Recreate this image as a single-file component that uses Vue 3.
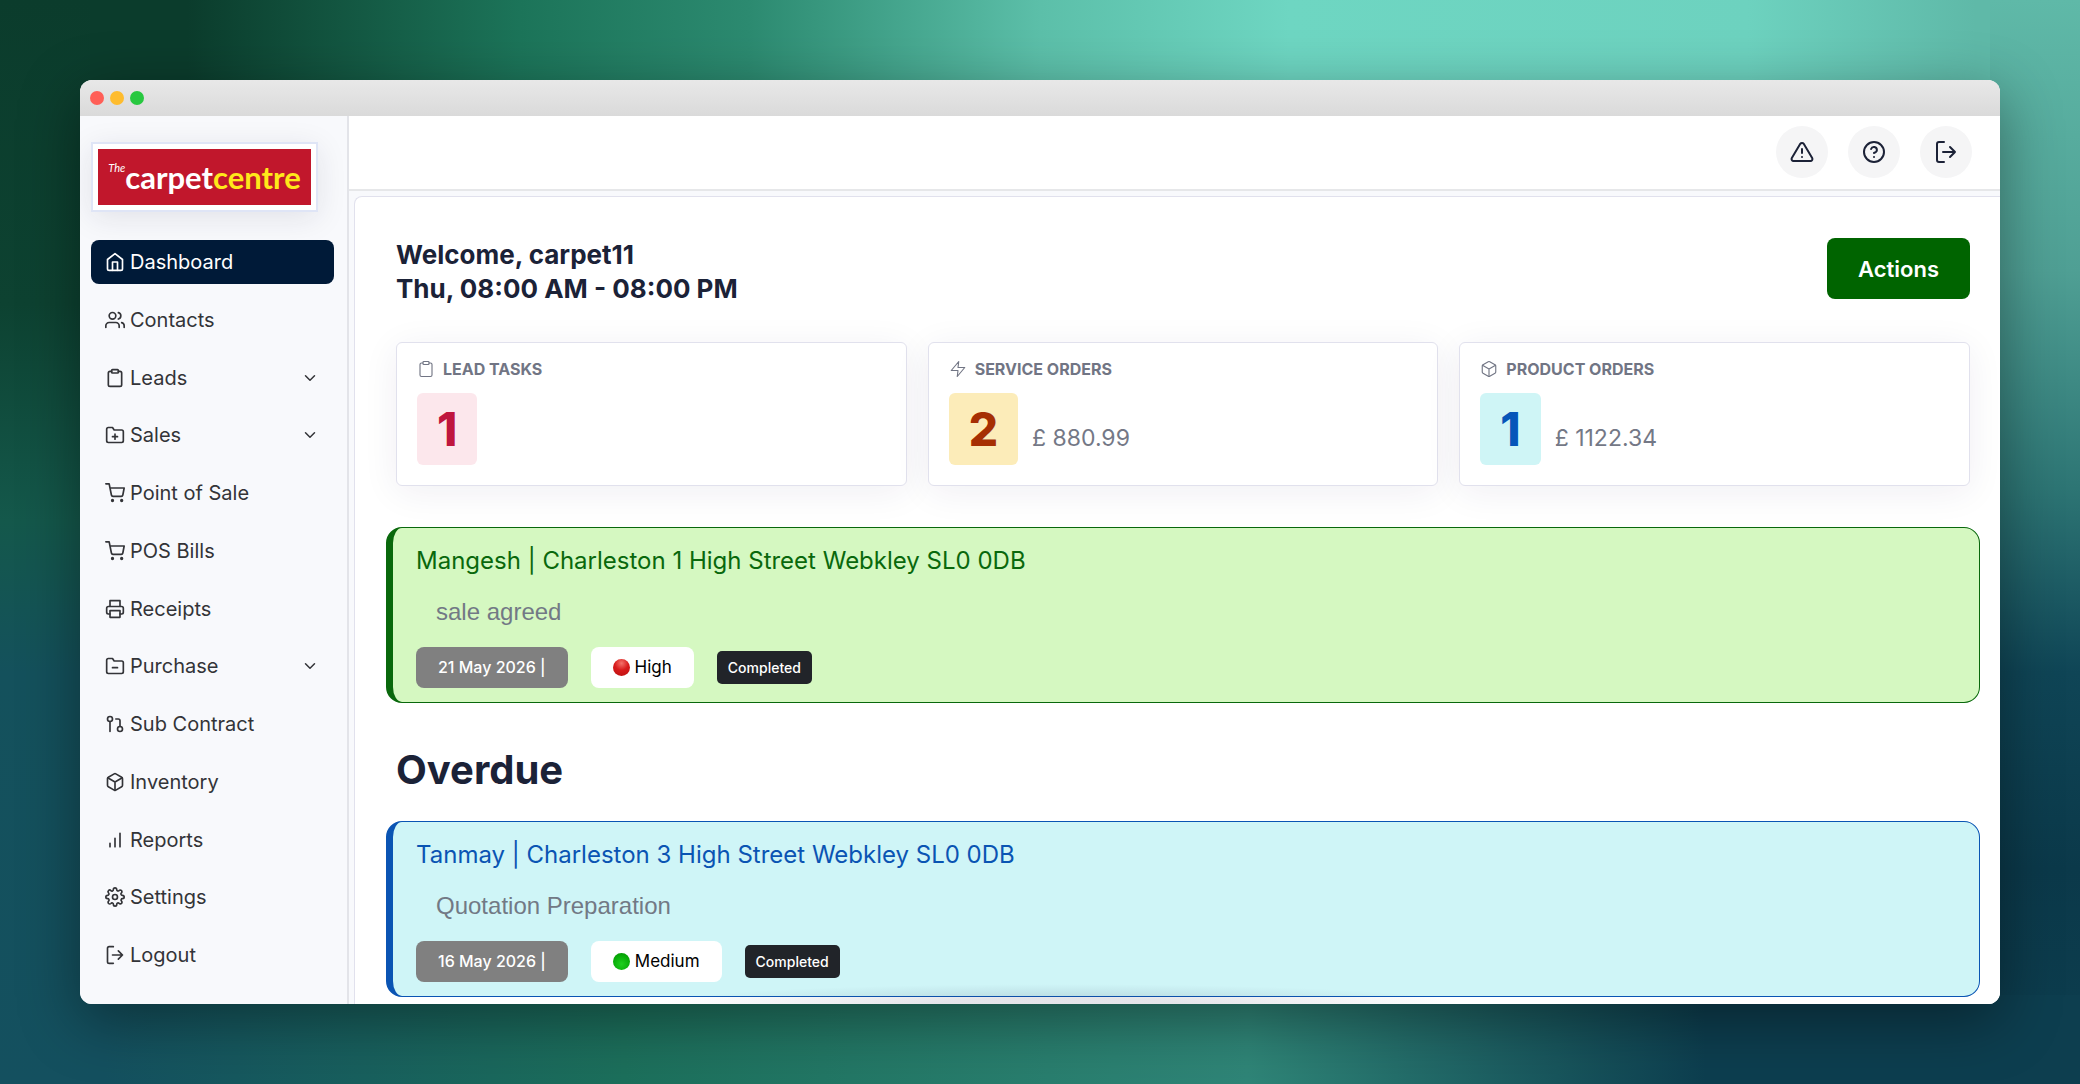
<script setup>
const icons = {
  home: '<path d="M3 9l9-7 9 7v11a2 2 0 0 1-2 2H5a2 2 0 0 1-2-2z"/><path d="M9 22V12h6v10"/>',
  users: '<path d="M17 21v-2a4 4 0 0 0-4-4H5a4 4 0 0 0-4 4v2"/><circle cx="9" cy="7" r="4"/><path d="M23 21v-2a4 4 0 0 0-3-3.87M16 3.13a4 4 0 0 1 0 7.75"/>',
  clipboard: '<path d="M16 4h2a2 2 0 0 1 2 2v14a2 2 0 0 1-2 2H6a2 2 0 0 1-2-2V6a2 2 0 0 1 2-2h2"/><rect x="8" y="2" width="8" height="4" rx="1"/>',
  folderPlus: '<path d="M22 19a2 2 0 0 1-2 2H4a2 2 0 0 1-2-2V5a2 2 0 0 1 2-2h5l2 3h9a2 2 0 0 1 2 2z"/><path d="M12 11v6M9 14h6"/>',
  folderMinus: '<path d="M22 19a2 2 0 0 1-2 2H4a2 2 0 0 1-2-2V5a2 2 0 0 1 2-2h5l2 3h9a2 2 0 0 1 2 2z"/><path d="M9 14h6"/>',
  cart: '<circle cx="9" cy="21" r="1"/><circle cx="20" cy="21" r="1"/><path d="M1 1h4l2.68 13.39a2 2 0 0 0 2 1.61h9.72a2 2 0 0 0 2-1.61L23 6H6"/>',
  printer: '<path d="M6 9V2h12v7M6 18H4a2 2 0 0 1-2-2v-5a2 2 0 0 1 2-2h16a2 2 0 0 1 2 2v5a2 2 0 0 1-2 2h-2"/><rect x="6" y="14" width="12" height="8"/>',
  pull: '<circle cx="18" cy="18" r="3"/><circle cx="6" cy="6" r="3"/><path d="M13 6h3a2 2 0 0 1 2 2v7M6 9v12"/>',
  box: '<path d="M21 16V8a2 2 0 0 0-1-1.73l-7-4a2 2 0 0 0-2 0l-7 4A2 2 0 0 0 3 8v8a2 2 0 0 0 1 1.73l7 4a2 2 0 0 0 2 0l7-4A2 2 0 0 0 21 16z"/><path d="M3.27 6.96L12 12.01l8.73-5.05M12 22.08V12"/>',
  bars: '<path d="M18 20V4M12 20V10M6 20v-4"/>',
  gear: '<circle cx="12" cy="12" r="3"/><path d="M19.4 15a1.65 1.65 0 0 0 .33 1.82l.06.06a2 2 0 1 1-2.83 2.83l-.06-.06a1.65 1.65 0 0 0-2.8 1.18V21a2 2 0 0 1-4 0v-.09A1.65 1.65 0 0 0 7.18 19.7l-.06.06a2 2 0 1 1-2.83-2.83l.06-.06A1.65 1.65 0 0 0 3.09 14H3a2 2 0 0 1 0-4h.09A1.65 1.65 0 0 0 4.3 7.18l-.06-.06a2 2 0 1 1 2.83-2.83l.06.06A1.65 1.65 0 0 0 10 3.09V3a2 2 0 0 1 4 0v.09a1.65 1.65 0 0 0 2.82 1.21l.06-.06a2 2 0 1 1 2.83 2.83l-.06.06A1.65 1.65 0 0 0 20.91 10H21a2 2 0 0 1 0 4h-.09a1.65 1.65 0 0 0-1.51 1z"/>',
  logout: '<path d="M10 22H5a2 2 0 0 1-2-2V4a2 2 0 0 1 2-2h5M16 17l5-5-5-5M21 12H9"/>',
  bolt: '<path d="M13 2L3 14h9l-1 8 10-12h-9l1-8z"/>',
  alert: '<path d="M10.29 3.86L1.82 18a2 2 0 0 0 1.71 3h16.94a2 2 0 0 0 1.71-3L13.71 3.86a2 2 0 0 0-3.42 0zM12 9v4M12 17h.01"/>',
  help: '<circle cx="12" cy="12" r="10"/><path d="M9.09 9a3 3 0 0 1 5.83 1c0 2-3 3-3 3M12 17h.01"/>',
  chevron: '<path d="M6 9l6 6 6-6"/>'
}

const menu = [
  { label: 'Dashboard', icon: 'home', active: true },
  { label: 'Contacts', icon: 'users' },
  { label: 'Leads', icon: 'clipboard', sub: true },
  { label: 'Sales', icon: 'folderPlus', sub: true },
  { label: 'Point of Sale', icon: 'cart' },
  { label: 'POS Bills', icon: 'cart' },
  { label: 'Receipts', icon: 'printer' },
  { label: 'Purchase', icon: 'folderMinus', sub: true },
  { label: 'Sub Contract', icon: 'pull' },
  { label: 'Inventory', icon: 'box' },
  { label: 'Reports', icon: 'bars' },
  { label: 'Settings', icon: 'gear' },
  { label: 'Logout', icon: 'logout' }
]

const tools = [
  { label: 'Alerts', icon: 'alert' },
  { label: 'Help', icon: 'help' },
  { label: 'Log out', icon: 'logout' }
]

const stats = [
  { label: 'Lead Tasks', icon: 'clipboard', count: 1, tone: 'rose' },
  { label: 'Service Orders', icon: 'bolt', count: 2, tone: 'amber', amount: '£ 880.99' },
  { label: 'Product Orders', icon: 'box', count: 1, tone: 'aqua', amount: '£ 1122.34' }
]

const today = {
  title: 'Mangesh | Charleston 1 High Street Webkley SL0 0DB',
  note: 'sale agreed', date: '21 May 2026 |', priority: 'High', status: 'Completed', tone: 'green'
}
const overdue = {
  title: 'Tanmay | Charleston 3 High Street Webkley SL0 0DB',
  note: 'Quotation Preparation', date: '16 May 2026 |', priority: 'Medium', status: 'Completed', tone: 'blue'
}
const sections = [{ tasks: [today] }, { heading: 'Overdue', tasks: [overdue] }]
</script>

<template>
  <div class="desktop">
    <div class="window">
      <div class="titlebar"><i class="red"></i><i class="yellow"></i><i class="green"></i></div>
      <div class="app">
        <aside class="sidebar">
          <a class="logo" href="#">
            <span class="brand"><small>The</small><b>carpet</b><b class="second">centre</b></span>
          </a>
          <nav>
            <a v-for="m in menu" :key="m.label" href="#" :class="{ active: m.active }">
              <svg class="icon" viewBox="0 0 24 24" v-html="icons[m.icon]"></svg>
              <span>{{ m.label }}</span>
              <svg v-if="m.sub" class="icon chevron" viewBox="0 0 24 24" v-html="icons.chevron"></svg>
            </a>
          </nav>
        </aside>
        <div class="content">
          <header>
            <button v-for="t in tools" :key="t.label" type="button" :aria-label="t.label">
              <svg class="icon" viewBox="0 0 24 24" v-html="icons[t.icon]"></svg>
            </button>
          </header>
          <main>
            <div class="intro">
              <h1>Welcome, carpet11<br />Thu, 08:00 AM - 08:00 PM</h1>
              <button type="button" class="actions">Actions</button>
            </div>
            <div class="stats">
              <section v-for="s in stats" :key="s.label" class="stat">
                <h2><svg class="icon" viewBox="0 0 24 24" v-html="icons[s.icon]"></svg>{{ s.label }}</h2>
                <div class="figures">
                  <strong :class="s.tone">{{ s.count }}</strong>
                  <span v-if="s.amount">{{ s.amount }}</span>
                </div>
              </section>
            </div>
            <template v-for="(group, i) in sections" :key="i">
              <h2 v-if="group.heading" class="heading">{{ group.heading }}</h2>
              <article v-for="t in group.tasks" :key="t.title" class="task" :class="t.tone">
                <h3>{{ t.title }}</h3>
                <p>{{ t.note }}</p>
                <div class="tags">
                  <span class="date">{{ t.date }}</span>
                  <span class="priority"><i></i>{{ t.priority }}</span>
                  <span class="status">{{ t.status }}</span>
                </div>
              </article>
            </template>
          </main>
        </div>
      </div>
    </div>
  </div>
</template>

<style>
body {
  margin: 0;
}
</style>

<style scoped>
* {
  box-sizing: border-box;
}
.desktop {
  display: flex;
  min-height: 100vh;
  padding: 80px 80px 81px;
  font-family: Inter, "Liberation Sans", sans-serif;
  background:
    linear-gradient(90deg, transparent 5%, #1c6f5b 30%, #2f8577 60%, #0d3e4f 82%, #0d3e4f) 0 100% / 100% 90px no-repeat,
    linear-gradient(#0b3c2c 0, #0d4231 28%, #14584b 48%, #14515c 62%, #14505f) 0 0 / 90px 100% no-repeat,
    linear-gradient(#5fb9a8 0, #4f9f94 25%, #2d7574 45%, #0f4556 62%, #0b394a 80%, #0d3e4f) 100% 0 / 90px 100% no-repeat,
    linear-gradient(90deg, #0b3c2c 0, #0b3c2c 9%, #1c7459 25%, #2c8a70 36%, #5cbfa9 50%, #6ed6c2 62%, #6dd2bf 84%, #5fb9a8 95%) 0 0 / 100% 90px no-repeat,
    #14505f;
}
.window {
  position: relative;
  display: flex;
  flex: 1;
  flex-direction: column;
  min-width: 0;
  overflow: hidden;
  border-radius: 12px;
  background: #fff;
  box-shadow: 0 16px 60px rgba(0, 0, 0, .4);
}
/* soft shade rising from the bottom edge of the window */
.window::after {
  position: absolute;
  right: 28%;
  bottom: 0;
  left: 30%;
  height: 20px;
  background: radial-gradient(ellipse 50% 100% at 50% 100%, rgba(40, 40, 80, .12) 30%, transparent);
  content: "";
  pointer-events: none;
}
.titlebar {
  display: flex;
  align-items: center;
  gap: 6px;
  height: 36px;
  padding-left: 10px;
  background: linear-gradient(#e8e8e8, #dadada);
}
.titlebar i {
  width: 14px;
  height: 14px;
  border-radius: 50%;
}
.titlebar .red { background: #ff5f57; }
.titlebar .yellow { background: #febc2e; }
.titlebar .green { background: #28c840; }
.app {
  display: flex;
  flex: 1;
}
.icon {
  flex: none;
  width: 20px;
  height: 20px;
  fill: none;
  stroke: currentColor;
  stroke-width: 2;
  stroke-linecap: round;
  stroke-linejoin: round;
}
.sidebar {
  display: flex;
  flex: none;
  flex-direction: column;
  width: 269px;
  padding: 26px 13px 27px 11px;
  border-right: 2px solid #e3e4e9;
  background: #f8f9fc;
}
.logo {
  width: 227px;
  padding: 5px;
  border: 2px solid #dfe5f6;
  background: #fff;
  box-shadow: 0 6px 30px rgba(30, 30, 60, .1);
  text-decoration: none;
}
.brand {
  display: flex;
  align-items: center;
  justify-content: center;
  height: 56px;
  background: #c1172c;
  color: #fff;
  font-family: Lato, sans-serif;
  font-size: 31px;
}
.brand small {
  align-self: flex-start;
  margin-top: 12px;
  font-size: 11px;
  font-style: italic;
}
.brand .second { color: #ffe81a; }
nav {
  display: flex;
  flex: 1;
  flex-direction: column;
  justify-content: space-between;
  margin-top: 28px;
}
nav a {
  display: flex;
  align-items: center;
  gap: 5px;
  height: 44px;
  padding: 0 15px 0 14px;
  border-radius: 8px;
  color: #333438;
  font-size: 20px;
  text-decoration: none;
}
nav a.active {
  background: #001a38;
  color: #fff;
}
.chevron {
  width: 18px;
  height: 18px;
  margin-left: auto;
}
.content {
  display: flex;
  flex: 1;
  flex-direction: column;
  min-width: 0;
  background: #f8f9fc;
}
header {
  display: flex;
  justify-content: flex-end;
  gap: 20px;
  padding: 10px 28px 11px;
  border-bottom: 2px solid #e6e7e9;
  background: #fff;
}
header button {
  display: grid;
  place-items: center;
  width: 52px;
  height: 52px;
  padding: 0;
  border: 0;
  border-radius: 50%;
  background: #f5f5f6;
  color: #1c2237;
}
header .icon {
  width: 24px;
  height: 24px;
}
main {
  flex: 1;
  margin: 5px 0 0 5px;
  padding: 41px 20px 7px 31px;
  border: 1px solid #e1e1ed;
  border-width: 1px 0 0 1px;
  border-radius: 8px 0 0;
  background: #fff;
}
h1, h2, h3, p {
  margin: 0;
}
.intro {
  display: flex;
  align-items: flex-start;
  justify-content: space-between;
  margin: 0 10px 36px;
}
h1 {
  color: #1b2237;
  font-size: 26px;
  font-weight: 700;
  line-height: 34px;
}
.actions {
  width: 143px;
  height: 61px;
  border: 0;
  border-radius: 8px;
  background: #006400;
  color: #fff;
  font-family: inherit;
  font-size: 22px;
  font-weight: 600;
}
.stats {
  display: grid;
  grid-template-columns: repeat(3, 1fr);
  gap: 21px;
  margin: 0 10px 41px;
}
.stat {
  height: 144px;
  padding: 16px 20px;
  border: 1px solid #e1e1ed;
  border-radius: 6px;
  background: #fff;
  box-shadow: 0 6px 36px rgba(40, 30, 90, .07);
}
.stat h2 {
  display: flex;
  align-items: center;
  gap: 8px;
  color: #717584;
  font-size: 16px;
  font-weight: 700;
  line-height: 20px;
  text-transform: uppercase;
}
.stat .icon {
  width: 18px;
  height: 18px;
  stroke-width: 1.5;
}
.figures {
  display: flex;
  align-items: baseline;
  gap: 14px;
  margin-top: 14px;
  color: #747886;
  font-size: 23px;
}
.figures strong {
  padding: 0 20px;
  border-radius: 6px;
  font-size: 46px;
  font-weight: 800;
  line-height: 72px;
}
.rose { background: #fce7ec; color: #bf163e; }
.amber { background: #fcecb9; color: #a62f03; }
.aqua { background: #cff5f6; color: #0655b9; }
.task {
  height: 176px;
  padding: 18px 23px;
  border: 1px solid var(--line);
  border-left: 7px solid var(--line);
  border-radius: 16px;
  background: var(--fill);
}
.task.green { --line: #09680c; --fill: #d5f8c1; --dot: radial-gradient(circle at 50% 25%, #f4726a, #d81b1b 45%, #b80f0f); }
.task.blue { --line: #0a54b3; --fill: #cff5f7; --dot: radial-gradient(circle at 50% 65%, #1ed01e, #08ac08 60%, #078a07); }
.task h3 {
  color: var(--line);
  font-size: 24px;
  font-weight: 400;
  line-height: 30px;
}
.task p {
  margin: 20px 20px 0;
  color: #727985;
  font-family: "Liberation Sans", Arial, sans-serif;
  font-size: 24px;
  line-height: 32px;
}
.tags {
  display: flex;
  align-items: center;
  gap: 23px;
  margin-top: 19px;
}
.tags span {
  display: flex;
  align-items: center;
  border-radius: 8px;
  font-size: 17px;
  line-height: 41px;
}
.tags .date {
  padding: 0 22px;
  background: #808080;
  color: #fff;
  font-size: 16px;
  font-weight: 500;
}
.tags .priority {
  gap: 5px;
  padding: 0 22px;
  background: #fff;
  color: #000;
}
.priority i {
  width: 17px;
  height: 17px;
  border-radius: 50%;
  background: var(--dot);
}
.tags .status {
  padding: 0 11px;
  border-radius: 5px;
  background: #212429;
  color: #fff;
  font-size: 14px;
  font-weight: 500;
  line-height: 33px;
}
.heading {
  margin: 42px 10px 26px;
  color: #1b2237;
  font-size: 40px;
  font-weight: 700;
  line-height: 50px;
}
</style>
